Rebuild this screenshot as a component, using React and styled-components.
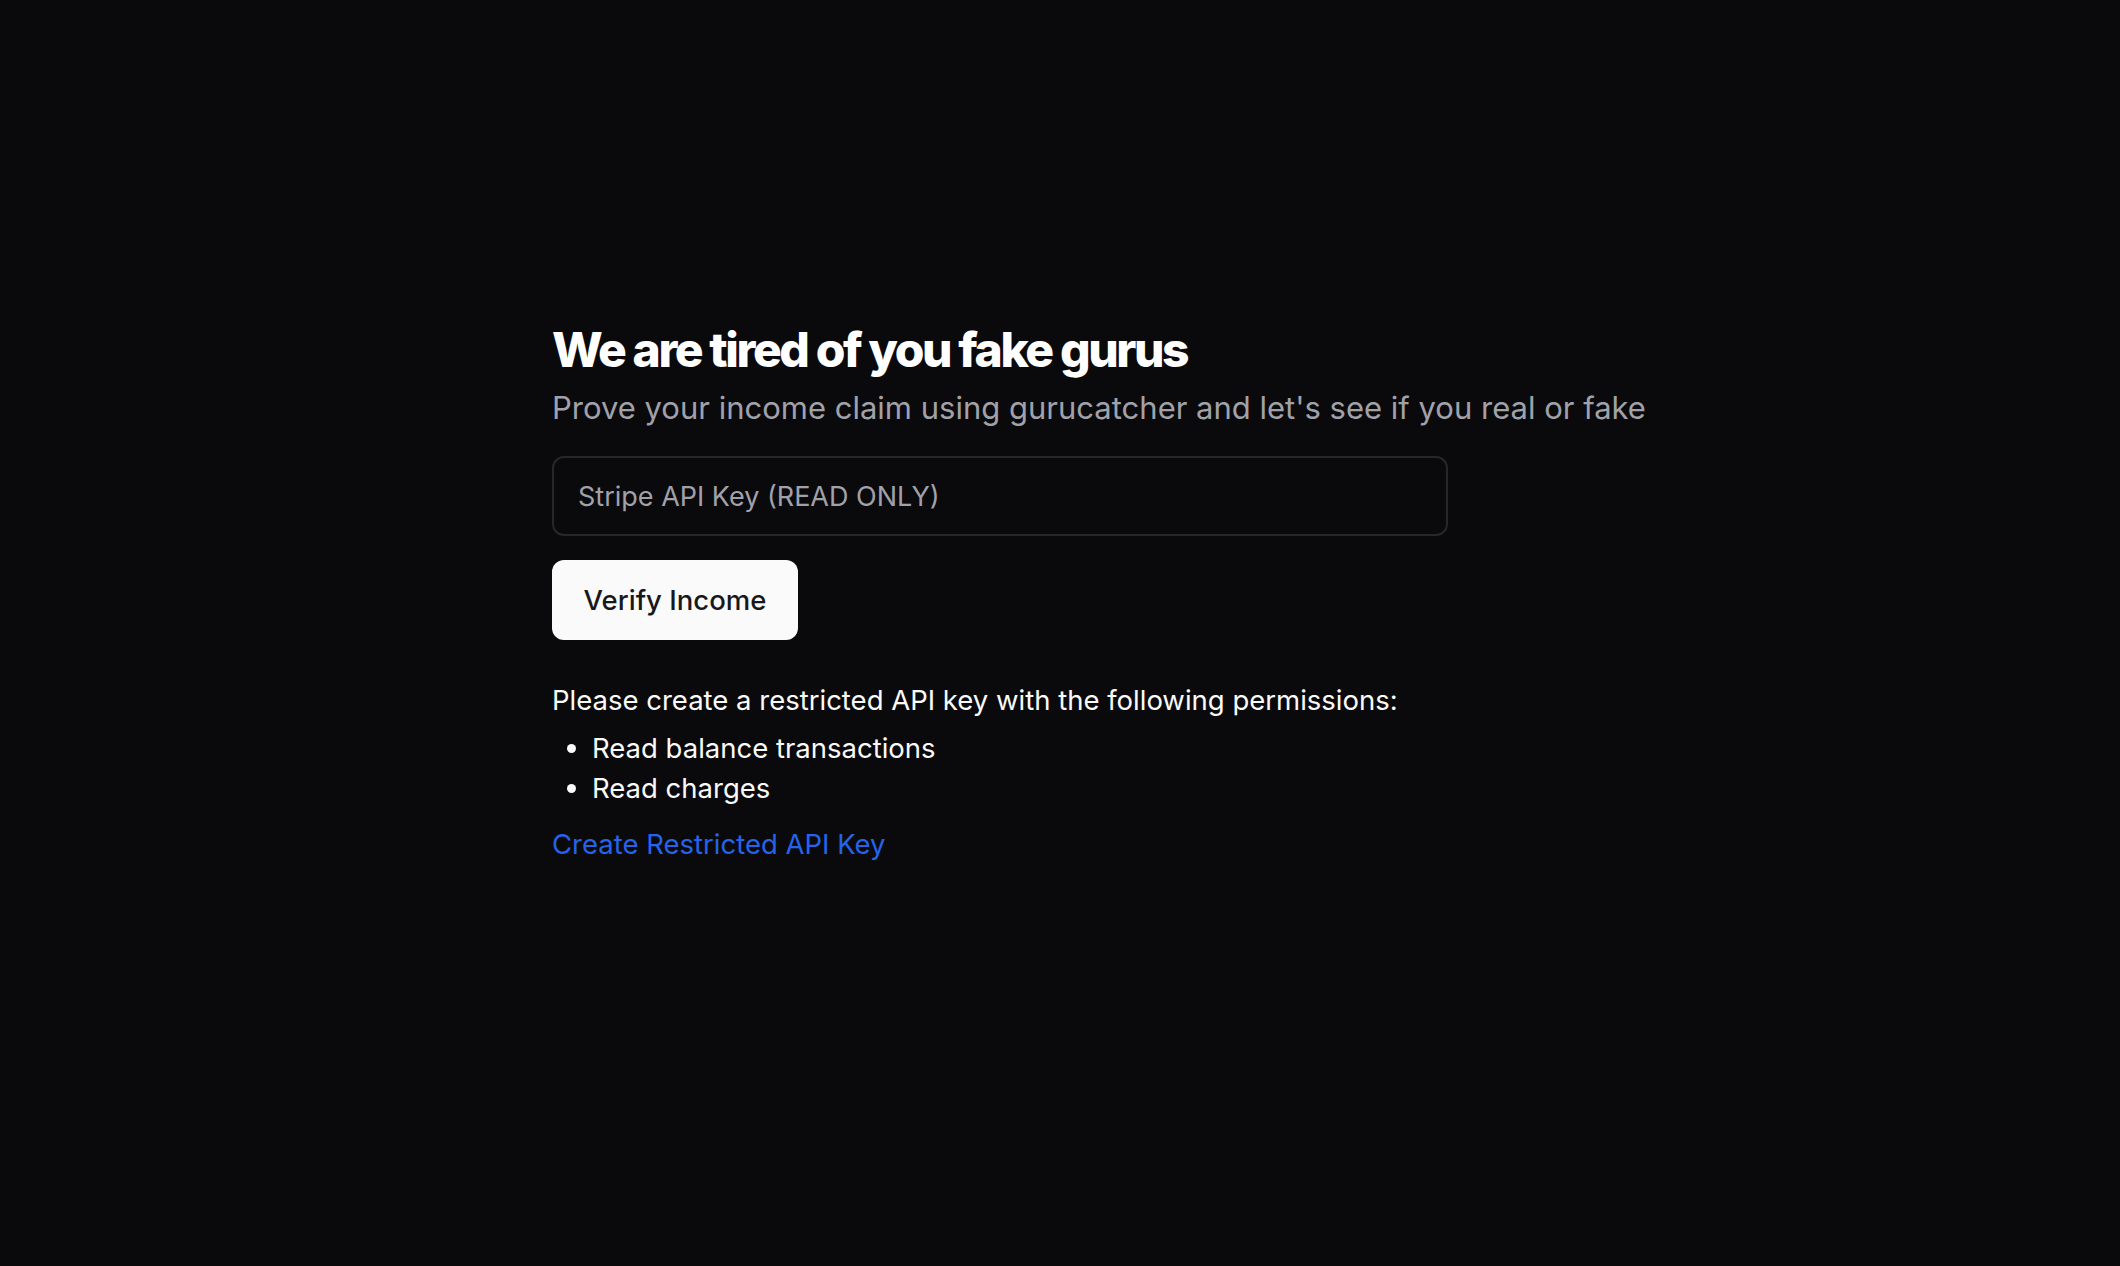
import styled, { createGlobalStyle } from "styled-components";

const GlobalStyle = createGlobalStyle`
  html, body {
    margin: 0;
    padding: 0;
    background: #0a0a0c;
    min-height: 100%;
  }
  body {
    font-family: Inter, "Noto Sans", sans-serif;
    color: #fafafa;
  }
`;

const Page = styled.main`
  min-height: 1266px;
  background: #0a0a0c;
  padding-top: 318px;
  box-sizing: border-box;
`;

const Container = styled.div`
  width: 1016px;
  margin: 0 auto;
  display: flex;
  flex-direction: column;
  align-items: flex-start;
`;

const Heading = styled.h1`
  margin: 0;
  font-size: 48px;
  line-height: 64px;
  font-weight: 800;
  letter-spacing: -0.05em;
  color: #ffffff;
`;

const Subtitle = styled.p`
  margin: 4px 0 0;
  font-size: 31px;
  line-height: 44px;
  color: #a1a1aa;
  white-space: nowrap;
`;

const Form = styled.form`
  margin-top: 26px;
  display: flex;
  flex-direction: column;
  align-items: flex-start;
  gap: 24px;
`;

const Input = styled.input`
  box-sizing: border-box;
  width: 896px;
  height: 80px;
  padding: 0 24px;
  border: 2px solid #27272a;
  border-radius: 12px;
  background: transparent;
  font-family: inherit;
  font-size: 27px;
  color: #fafafa;
  outline: none;
  &::placeholder {
    color: #a1a1aa;
  }
`;

const Button = styled.button`
  box-sizing: border-box;
  height: 80px;
  width: 246px;
  padding: 0;
  border: none;
  border-radius: 12px;
  background: #fafafa;
  color: #18181b;
  font-family: inherit;
  font-size: 27.5px;
  font-weight: 500;
  cursor: pointer;
`;

const Info = styled.div`
  margin-top: 40px;
  font-size: 27.5px;
  line-height: 40px;
  color: #fafafa;
`;

const Text = styled.p`
  margin: 0;
`;

const List = styled.ul`
  margin: 8px 0 0;
  padding-left: 40px;
  list-style: disc;
`;

const Item = styled.li`
  line-height: 40px;
`;

const Link = styled.a`
  display: inline-block;
  margin-top: 16px;
  color: #2563eb;
  text-decoration: none;
  font-size: 27.5px;
  line-height: 40px;
`;

export default function App() {
  return (
    <>
      <GlobalStyle />
      <Page>
        <Container>
          <Heading>We are tired of you fake gurus</Heading>
          <Subtitle>
            Prove your income claim using gurucatcher and let's see if you real or fake
          </Subtitle>
          <Form onSubmit={(e) => e.preventDefault()}>
            <Input type="text" placeholder="Stripe API Key (READ ONLY)" />
            <Button type="submit">Verify Income</Button>
          </Form>
          <Info>
            <Text>Please create a restricted API key with the following permissions:</Text>
            <List>
              <Item>Read balance transactions</Item>
              <Item>Read charges</Item>
            </List>
            <Link href="#">Create Restricted API Key</Link>
          </Info>
        </Container>
      </Page>
    </>
  );
}
